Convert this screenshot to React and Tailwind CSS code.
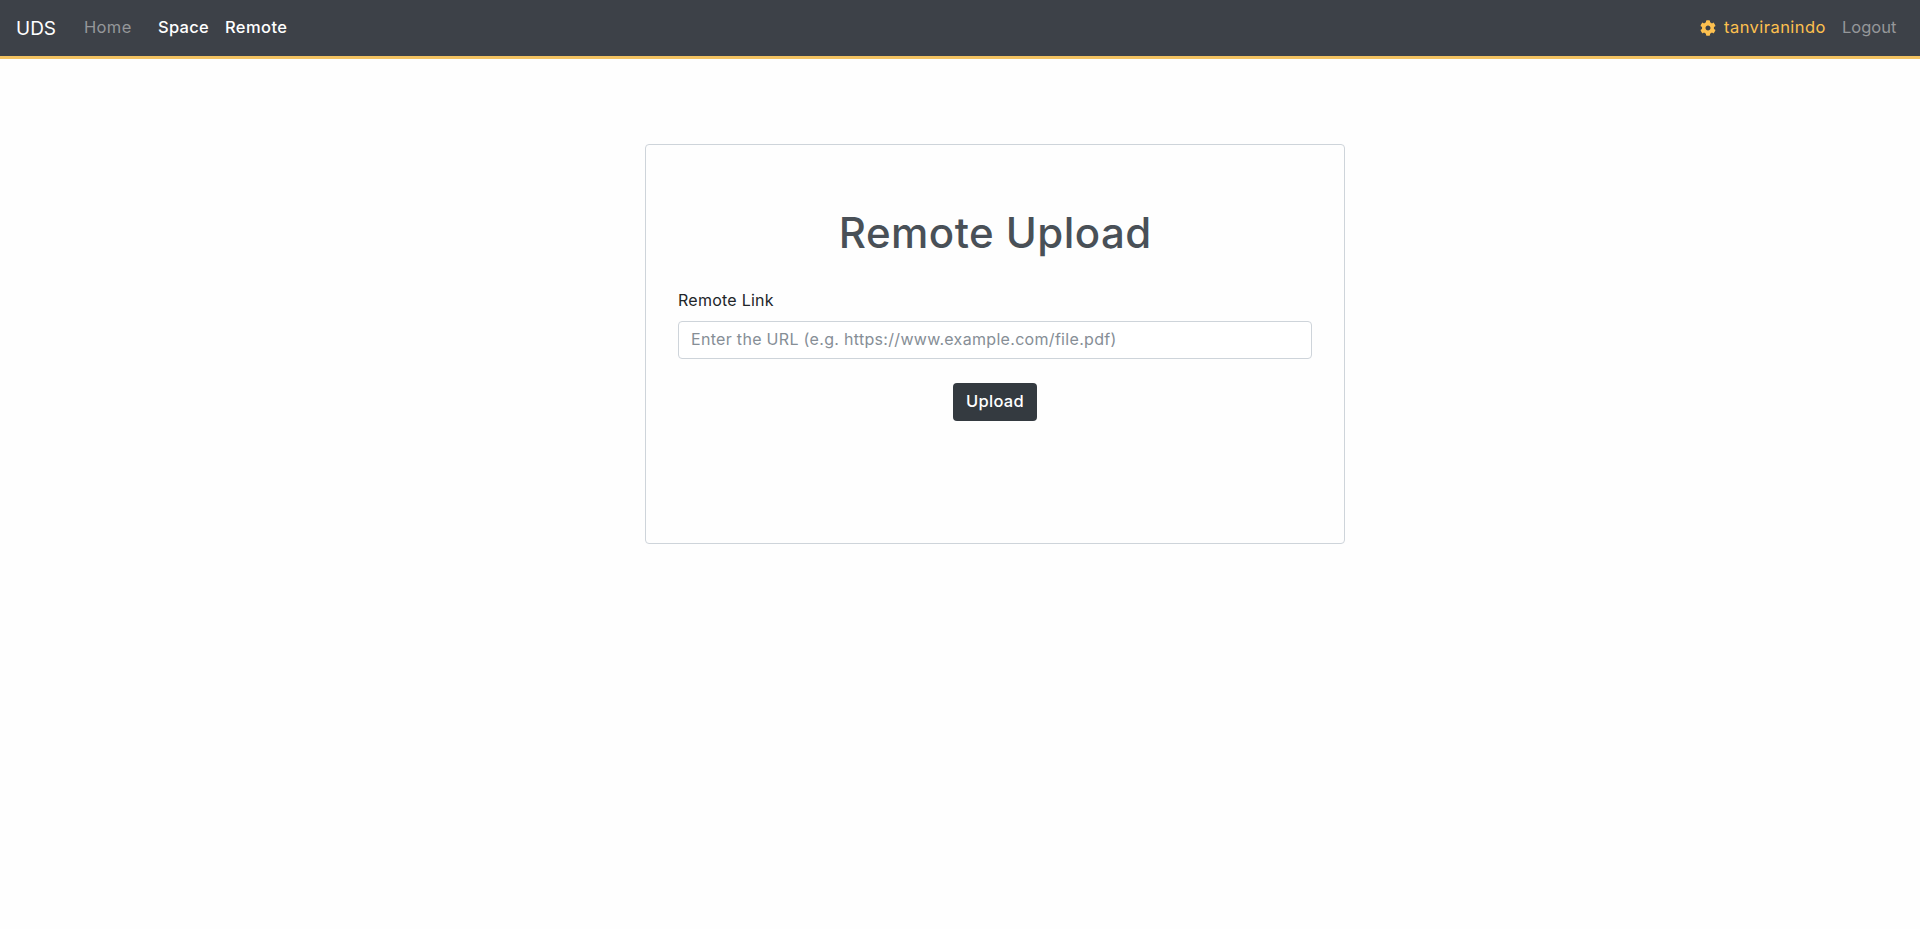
import { FaCog } from "react-icons/fa";

function NavBar() {
  return (
    <nav className="flex h-[59px] items-center justify-between border-b-3 border-[#f3c261] bg-[#3d4148] pr-6 pl-4 text-[16.5px] leading-6 whitespace-nowrap text-white">
      <div className="flex items-center">
        <a href="#" className="w-[68px] pt-px text-[19px] leading-[30px]">UDS</a>
        <a href="#" className="w-[74px] pb-0.5 tracking-[0.35px] text-[#95979a]">Home</a>
        <a href="#" className="w-[67px] pb-0.5 font-medium tracking-[0.3px]">Space</a>
        <a href="#" className="pb-0.5 font-medium tracking-[0.4px]">Remote</a>
      </div>
      <div className="flex items-center">
        <a href="#" className="flex items-center text-[#fdc04f]">
          <FaCog className="mr-2 size-4" />
          <span className="w-[118px] pb-0.5 tracking-[0.45px]">tanviranindo</span>
        </a>
        <a href="#" className="w-[54px] pb-0.5 text-[#95979a]">Logout</a>
      </div>
    </nav>
  );
}

function RemoteUploadCard() {
  return (
    <form className="flex h-[400px] w-[700px] flex-col rounded border border-[#ced4da] px-8 pt-16">
      <h1 className="pl-[0.5px] text-center text-[42px] leading-[48px] font-medium tracking-[0.45px] text-[#495057]">Remote Upload</h1>
      <label htmlFor="link" className="mt-[31px] mb-[9px] text-base leading-6 tracking-[0.25px] text-[#212529]">Remote Link</label>
      <input
        id="link"
        type="text"
        placeholder="Enter the URL (e.g. https://www.example.com/file.pdf)"
        className="h-[38px] rounded border border-[#ced4da] bg-white px-3 pb-0.5 text-base leading-6 tracking-[0.31px] placeholder:text-[#868e96]"
      />
      <button type="button" className="mt-6 h-[38px] w-[84px] self-center rounded bg-[#343a40] pb-0.5 text-[16.5px] leading-6 font-medium tracking-[0.3px] text-white">
        Upload
      </button>
    </form>
  );
}

export default function App() {
  return (
    <div className="min-h-screen bg-[#fefefe] font-['Inter',sans-serif]">
      <NavBar />
      <main className="flex pt-[85px] pl-[645px]">
        <RemoteUploadCard />
      </main>
    </div>
  );
}
